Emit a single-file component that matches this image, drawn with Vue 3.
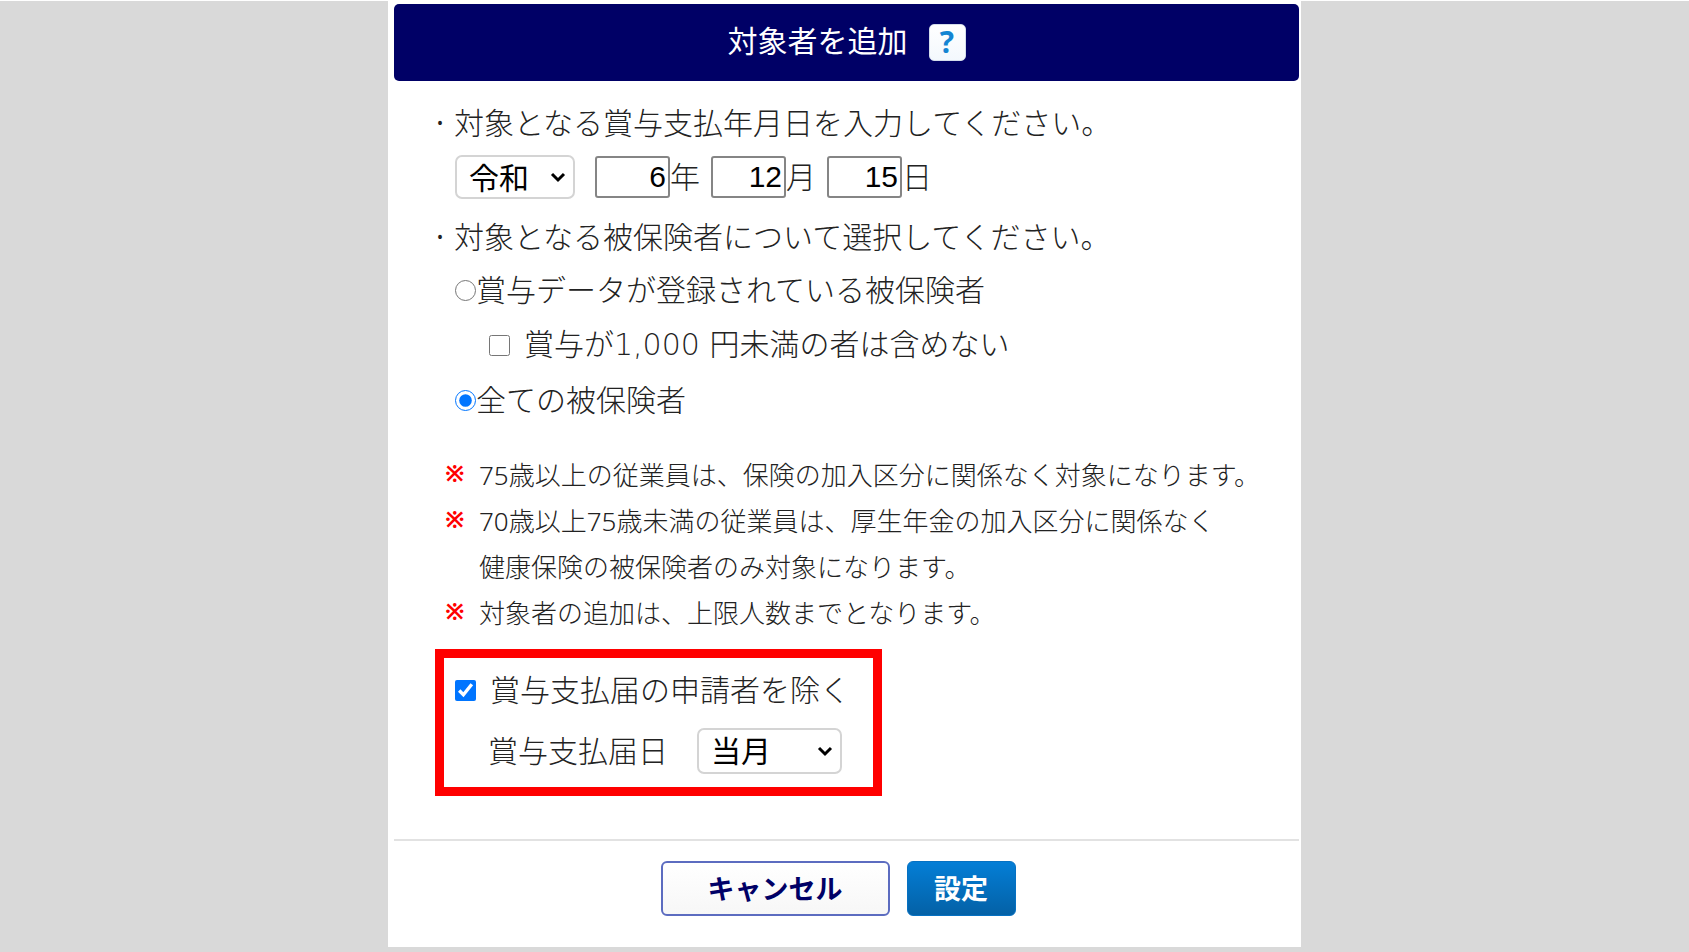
<script setup>
import { ref } from 'vue'

const era = ref('令和')
const year = ref('6')
const month = ref('12')
const day = ref('15')
const target = ref('all')
const excludeSmall = ref(false)
const excludeApplied = ref(true)
const noticeMonth = ref('当月')

const notes = [
  ['75歳以上の従業員は、保険の加入区分に関係なく対象になります。'],
  ['70歳以上75歳未満の従業員は、厚生年金の加入区分に関係なく', '健康保険の被保険者のみ対象になります。'],
  ['対象者の追加は、上限人数までとなります。'],
]
</script>

<template>
  <div class="page">
    <main class="dialog">
      <header class="title-bar">
        <h1>対象者を追加</h1>
        <button class="help" type="button" aria-label="ヘルプ">?</button>
      </header>

      <form id="target-form" class="content" @submit.prevent>
        <p class="lead"><span class="dot">·</span>対象となる賞与支払年月日を入力してください。</p>
        <div class="date-row">
          <span class="select era">
            <select v-model="era" aria-label="元号">
              <option>令和</option>
              <option>平成</option>
            </select>
            <svg viewBox="0 0 16 12" aria-hidden="true"><path d="M2 3 L8 9 L14 3" /></svg>
          </span>
          <label><input v-model="year" type="text" inputmode="numeric" />年</label>
          <label><input v-model="month" type="text" inputmode="numeric" />月</label>
          <label><input v-model="day" type="text" inputmode="numeric" />日</label>
        </div>

        <p class="lead second"><span class="dot">·</span>対象となる被保険者について選択してください。</p>
        <div class="choices">
          <label class="choice radio">
            <input v-model="target" type="radio" name="target" value="registered" />賞与データが登録されている被保険者
          </label>
          <label class="choice check nested">
            <input v-model="excludeSmall" type="checkbox" />賞与が1,000 円未満の者は含めない
          </label>
          <label class="choice radio">
            <input v-model="target" type="radio" name="target" value="all" />全ての被保険者
          </label>
        </div>

        <ul class="notes">
          <li v-for="(lines, i) in notes" :key="i">
            <span class="mark">※</span>
            <span class="note-text"><span v-for="line in lines" :key="line">{{ line }}</span></span>
          </li>
        </ul>

        <section class="highlight">
          <label class="choice check">
            <input v-model="excludeApplied" type="checkbox" />賞与支払届の申請者を除く
          </label>
          <div class="notice-row">
            <label for="notice-month">賞与支払届日</label>
            <span class="select month">
              <select id="notice-month" v-model="noticeMonth">
                <option>当月</option>
                <option>前月</option>
              </select>
              <svg viewBox="0 0 16 12" aria-hidden="true"><path d="M2 3 L8 9 L14 3" /></svg>
            </span>
          </div>
        </section>
      </form>

      <footer class="actions">
        <button class="cancel" type="button">キャンセル</button>
        <button class="submit" type="submit" form="target-form">設定</button>
      </footer>
    </main>
  </div>
</template>

<style>
body {
  margin: 0;
  background: #d9d9d9;
}
</style>

<style scoped>
.page {
  border-top: 1px solid #fff;
  color: #222;
  font-family: "Noto Sans", "Noto Sans CJK JP", sans-serif;
  font-size: 30px;
  font-weight: 300;
  line-height: 44px;
}

.page * {
  box-sizing: border-box;
}

.dialog {
  max-width: 913px;
  margin: 0 auto;
  padding: 3px 2px 0 6px;
  background: #fff;
}

.title-bar {
  display: flex;
  align-items: center;
  justify-content: center;
  gap: 21px;
  min-height: 77px;
  border-radius: 5px;
  background: #000066;
  color: #fff;
}

h1 {
  margin: 0;
  padding-bottom: 4px;
  font-size: 30px;
  font-weight: 400;
}

button,
input,
select {
  margin: 0;
  font-family: inherit;
}

.help {
  width: 37px;
  height: 37px;
  padding: 0 0 2px;
  border: 1px solid #d3dcea;
  border-radius: 5px;
  background: linear-gradient(#fff, #f3f8fd);
  color: #1585d3;
  font-family: "Open Sans", sans-serif;
  font-size: 30px;
  font-weight: 700;
  line-height: 32px;
}

.content {
  padding: 20px 40px 43px 41px;
}

.lead {
  display: flex;
  margin: 0;
}

.lead.second {
  margin-top: 16px;
}

.dot {
  width: 19px;
  padding-left: 1px;
  font-weight: 400;
}

.date-row {
  display: flex;
  align-items: center;
  gap: 11px;
  margin: 10px 0 0 20px;
}

.date-row label {
  display: flex;
  align-items: center;
}

.date-row input {
  width: 75px;
  height: 42px;
  padding: 0 2px;
  border: 2px solid #858585;
  border-radius: 3px;
  background: #fff;
  color: #000;
  font-family: "Liberation Sans", sans-serif;
  font-size: 30px;
  text-align: right;
}

.select {
  position: relative;
  display: inline-flex;
}

.select select {
  appearance: none;
  width: 100%;
  height: 44px;
  padding: 0 12px 2px;
  border: 2px solid #d4d4d4;
  border-radius: 7px;
  background: #fff;
  color: #000;
  font-size: 30px;
}

.select svg {
  position: absolute;
  top: 50%;
  right: 9px;
  width: 16px;
  height: 12px;
  margin-top: -6px;
  fill: none;
  stroke: #000;
  stroke-width: 3;
  pointer-events: none;
}

.era {
  width: 120px;
  margin-right: 9px;
}

.month {
  width: 145px;
}

.month select {
  height: 46px;
}

.choices {
  display: grid;
  gap: 11px;
  margin: 9px 0 0 20px;
}

.choice {
  display: flex;
  align-items: center;
}

.choice input {
  flex: none;
  width: 21px;
  height: 21px;
  accent-color: #0075ff;
}

.check {
  gap: 14px;
}

.nested {
  margin-left: 34px;
  font-family: "DejaVu Sans", "Noto Sans CJK JP", sans-serif;
}

.notes {
  margin: 30px -20px 13px 10px;
  padding: 0;
  list-style: none;
  font-size: 26px;
  line-height: 46px;
}

.notes li {
  display: flex;
}

.mark {
  width: 34px;
  color: #f00;
  font-size: 23px;
  font-weight: 700;
  line-height: 42px;
}

.note-text {
  display: grid;
}

.highlight {
  width: fit-content;
  padding: 10px 23px 13px 11px;
  border: 9px solid #f00;
}

.notice-row {
  display: flex;
  align-items: center;
  gap: 29px;
  margin: 16px 0 0 33px;
}

.actions {
  display: flex;
  justify-content: center;
  gap: 17px;
  padding: 20px 17px 31px 0;
  border-top: 2px solid #e2e2e2;
}

.actions button {
  height: 55px;
  padding-bottom: 3px;
  border-radius: 6px;
  font-size: 27px;
  font-weight: 700;
}

.cancel {
  width: 229px;
  border: 2px solid #5c6cc0;
  background: linear-gradient(#fff, #f7f7f7);
  color: #000066;
}

.submit {
  width: 109px;
  border: 1px solid #0671c2;
  background: linear-gradient(#047ed6, #0461a6);
  color: #fff;
}
</style>
